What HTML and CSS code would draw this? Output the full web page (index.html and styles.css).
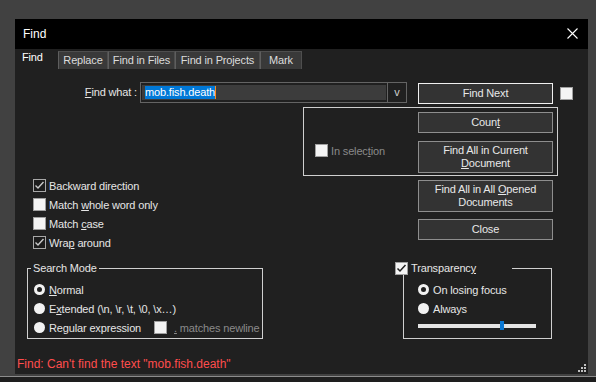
FILE: index.html
```html
<!DOCTYPE html>
<html lang="en">

<head>
  <meta charset="UTF-8">
  <meta name="viewport" content="width=device-width, initial-scale=1.0">
  <title>Find</title>
  <link rel="stylesheet" href="styles.css">
</head>

<body>
  <div class="desk">
    <div class="window">
      <div class="titlebar">
        <span class="title">Find</span>
        <svg class="close-x" width="11" height="11" viewBox="0 0 11 11">
          <path d="M0.5 0.5 L10.5 10.5 M10.5 0.5 L0.5 10.5" stroke="#fff" stroke-width="1.1" fill="none" />
        </svg>
      </div>

      <div class="tabs">
        <div class="tab active">Find</div>
        <div class="tab w-replace">Replace</div>
        <div class="tab w-files">Find in Files</div>
        <div class="tab w-projects">Find in Projects</div>
        <div class="tab w-mark">Mark</div>
      </div>

      <div class="content">
        <div class="find-row">
          <label class="find-label" for="what"><u>F</u>ind what :</label>
          <div class="combo">
            <div class="combo-edit" id="what"><span class="selected">mob.fish.death</span><span class="caret"></span></div>
            <div class="combo-btn">v</div>
          </div>
          <button class="btn default">Find Next</button>
          <span class="box plain square"></span>
        </div>

        <div class="main">
          <div class="options">
            <div class="check-row">
              <span class="box dark-checked">
                <svg width="11" height="11" viewBox="0 0 11 11"><path d="M1.5 5.5 L4 8 L9.5 2" stroke="#c8c8c8" stroke-width="1.4" fill="none" /></svg>
              </span>
              <span>Backward direction</span>
            </div>
            <div class="check-row">
              <span class="box plain"></span>
              <span>Match <u>w</u>hole word only</span>
            </div>
            <div class="check-row">
              <span class="box plain"></span>
              <span>Match <u>c</u>ase</span>
            </div>
            <div class="check-row">
              <span class="box dark-checked">
                <svg width="11" height="11" viewBox="0 0 11 11"><path d="M1.5 5.5 L4 8 L9.5 2" stroke="#c8c8c8" stroke-width="1.4" fill="none" /></svg>
              </span>
              <span>Wra<u>p</u> around</span>
            </div>
          </div>

          <div class="actions">
            <div class="sel-group">
              <div class="sel-check">
                <span class="box plain"></span>
                <span class="dim">In selec<u>t</u>ion</span>
              </div>
              <div class="sel-buttons">
                <button class="btn">Coun<u>t</u></button>
                <button class="btn tall">Find All in Current<br><u>D</u>ocument</button>
              </div>
            </div>
            <button class="btn tall opened">Find All in All <u>O</u>pened<br>Documents</button>
            <button class="btn close">Close</button>
          </div>
        </div>

        <div class="modes">
          <fieldset class="group search-mode">
            <legend>Search Mode</legend>
            <div class="radio-row">
              <span class="radio on"></span>
              <span><u>N</u>ormal</span>
            </div>
            <div class="radio-row">
              <span class="radio"></span>
              <span>E<u>x</u>tended (\n, \r, \t, \0, \x…)</span>
            </div>
            <div class="radio-row">
              <span class="radio"></span>
              <span class="regex-label">Re<u>g</u>ular expression</span>
              <span class="box plain"></span>
              <span class="dim"><u>.</u> matches newline</span>
            </div>
          </fieldset>

          <fieldset class="group transparency">
            <legend>
              <span class="box plain">
                <svg width="11" height="11" viewBox="0 0 11 11"><path d="M1.5 5.5 L4 8 L9.5 2" stroke="#202020" stroke-width="1.5" fill="none" /></svg>
              </span>
              <span>Transparenc<u>y</u></span>
            </legend>
            <div class="radio-row">
              <span class="radio on"></span>
              <span>On losing focus</span>
            </div>
            <div class="radio-row">
              <span class="radio"></span>
              <span>Always</span>
            </div>
            <div class="slider">
              <span class="thumb" style="left: 82px"></span>
            </div>
          </fieldset>
        </div>

        <div class="status">Find: Can't find the text "mob.fish.death"</div>

        <svg class="grip" width="8" height="8" viewBox="0 0 8 8">
          <rect x="6" y="0" width="2" height="2" fill="#c0c0c0" />
          <rect x="3" y="3" width="2" height="2" fill="#c0c0c0" />
          <rect x="6" y="3" width="2" height="2" fill="#c0c0c0" />
          <rect x="0" y="6" width="2" height="2" fill="#c0c0c0" />
          <rect x="3" y="6" width="2" height="2" fill="#c0c0c0" />
          <rect x="6" y="6" width="2" height="2" fill="#c0c0c0" />
        </svg>
      </div>
    </div>
  </div>
  <div class="taskline"></div>
</body>

</html>
```

FILE: styles.css
```css
* {
  margin: 0;
  padding: 0;
  box-sizing: border-box;
}

body {
  background-color: #1e1e1e;
  font-family: 'Liberation Sans', Arial, sans-serif;
  font-size: 11px;
  letter-spacing: -0.15px;
  color: #e6e6e6;
}

u {
  text-underline-offset: 1px;
}

.desk {
  background-color: #414141;
  height: 376px;
  padding: 19px 0 0 15px;
}

.taskline {
  height: 1px;
  background-color: #8c8c8c;
}

.window {
  width: 573px;
  height: 355px;
  background-color: #202020;
  display: flex;
  flex-direction: column;
}

/* title bar */
.titlebar {
  height: 30px;
  background-color: #000;
  display: flex;
  align-items: center;
  justify-content: space-between;
  padding: 0 10px 1px 8px;
}

.title {
  font-size: 12px;
  letter-spacing: 0;
  color: #fff;
}

/* tabs */
.tabs {
  height: 20px;
  display: flex;
  align-items: flex-end;
}

.tab {
  height: 18px;
  line-height: 17px;
  text-align: center;
  background-color: #393939;
  border: 1px solid #4e4e4e;
  border-bottom: none;
  border-left-color: #5e5e5e;
  color: #dcdcdc;
}

.tab.active {
  height: 20px;
  width: 43px;
  line-height: 17px;
  text-align: left;
  padding-left: 7px;
  background-color: #202020;
  border: none;
  color: #fff;
}

.w-replace { width: 50px; }
.w-files { width: 67px; }
.w-projects { width: 85px; }
.w-mark { width: 42px; }

/* content */
.content {
  flex: 1;
  position: relative;
  padding-top: 13px;
}

.find-row {
  display: flex;
  align-items: flex-start;
}

.find-label {
  width: 122px;
  line-height: 21px;
  text-align: right;
}

.combo {
  margin-left: 3px;
  width: 267px;
  height: 21px;
  border: 1px solid #646464;
  display: flex;
}

.combo-edit {
  width: 244px;
  height: 15px;
  margin: 2px 0 0 1px;
  background-color: #3c3c3c;
  padding: 1px 0 0 3px;
  display: flex;
  align-items: flex-start;
}

.selected {
  background-color: #0078d7;
  color: #fff;
  line-height: 13px;
  height: 13px;
}

.caret {
  width: 1px;
  height: 13px;
  background-color: #ff8c1a;
}

.combo-btn {
  margin-left: 1px;
  flex: 1;
  border-left: 1px solid #646464;
  text-align: center;
  line-height: 18px;
  color: #cfcfcf;
}

.btn {
  width: 135px;
  height: 21px;
  background-color: #333;
  border: 1px solid #8e8e8e;
  color: #e8e8e8;
  font-family: inherit;
  font-size: 11px;
  letter-spacing: inherit;
  line-height: 13px;
}

.btn.tall {
  height: 32px;
}

.btn.default {
  margin: 1px 0 0 11px;
  border-color: #f0f0f0;
}

.box {
  width: 13px;
  height: 13px;
  flex: none;
  display: inline-flex;
  align-items: center;
  justify-content: center;
}

.box.plain {
  background-color: #f4f4f4;
  border: 1px solid #a0a0a0;
}

.box.dark-checked {
  background-color: #1c1c1c;
  border: 1px solid #a8a8a8;
}

.square {
  margin: 5px 0 0 7px;
}

.dim {
  color: #8a8a8a;
  white-space: nowrap;
}

/* main block */
.main {
  margin-top: 3px;
  display: flex;
  align-items: flex-start;
}

.options {
  width: 288px;
  padding: 69px 0 0 18px;
}

.check-row {
  height: 19px;
  display: flex;
  align-items: center;
  gap: 3px;
}

.actions {
  display: flex;
  flex-direction: column;
  align-items: flex-start;
}

.sel-group {
  width: 255px;
  height: 69px;
  border: 1px solid #cfcfcf;
  display: flex;
  padding: 4px 4px 0 11px;
}

.sel-check {
  width: 103px;
  height: 13px;
  margin-top: 32px;
  display: flex;
  align-items: center;
  gap: 3px;
}

.sel-buttons {
  display: flex;
  flex-direction: column;
  gap: 8px;
}

.opened {
  margin: 4px 0 0 115px;
}

.close {
  margin: 7px 0 0 115px;
}

/* search mode / transparency */
.modes {
  margin-top: 9px;
  display: flex;
}

.group {
  height: 78px;
  border: 1px solid #d0d0d0;
}

.group legend {
  line-height: 14px;
  padding: 0 2px;
}

.search-mode {
  margin-left: 12px;
  width: 236px;
  padding: 5px 0 0 6px;
}

.search-mode legend {
  margin-left: -3px;
}

.transparency {
  margin-left: 140px;
  width: 149px;
  padding: 5px 0 0 14px;
}

.transparency legend {
  margin-left: -23px;
  padding: 0 36px 0 0;
  display: flex;
  align-items: center;
  gap: 3px;
}

.radio-row {
  height: 19px;
  display: flex;
  align-items: center;
  gap: 4px;
  white-space: nowrap;
}

.radio {
  width: 11px;
  height: 11px;
  border-radius: 50%;
  background-color: #f2f2f2;
  flex: none;
}

.radio.on {
  background-color: #202020;
  border: 3px solid #f2f2f2;
}

.regex-label {
  width: 101px;
}

.regex-label + .box {
  margin-right: 3px;
}

.slider {
  position: relative;
  margin-top: 6px;
  width: 118px;
  height: 4px;
  background-color: #e4e4e4;
}

.thumb {
  position: absolute;
  top: -3px;
  width: 4px;
  height: 9px;
  background-color: #0a78d4;
}

.status {
  margin-top: 17px;
  padding-left: 2px;
  font-size: 12px;
  letter-spacing: 0;
  line-height: 16px;
  color: #ff4d4d;
}

.grip {
  position: absolute;
  right: 2px;
  bottom: 2px;
}
```
